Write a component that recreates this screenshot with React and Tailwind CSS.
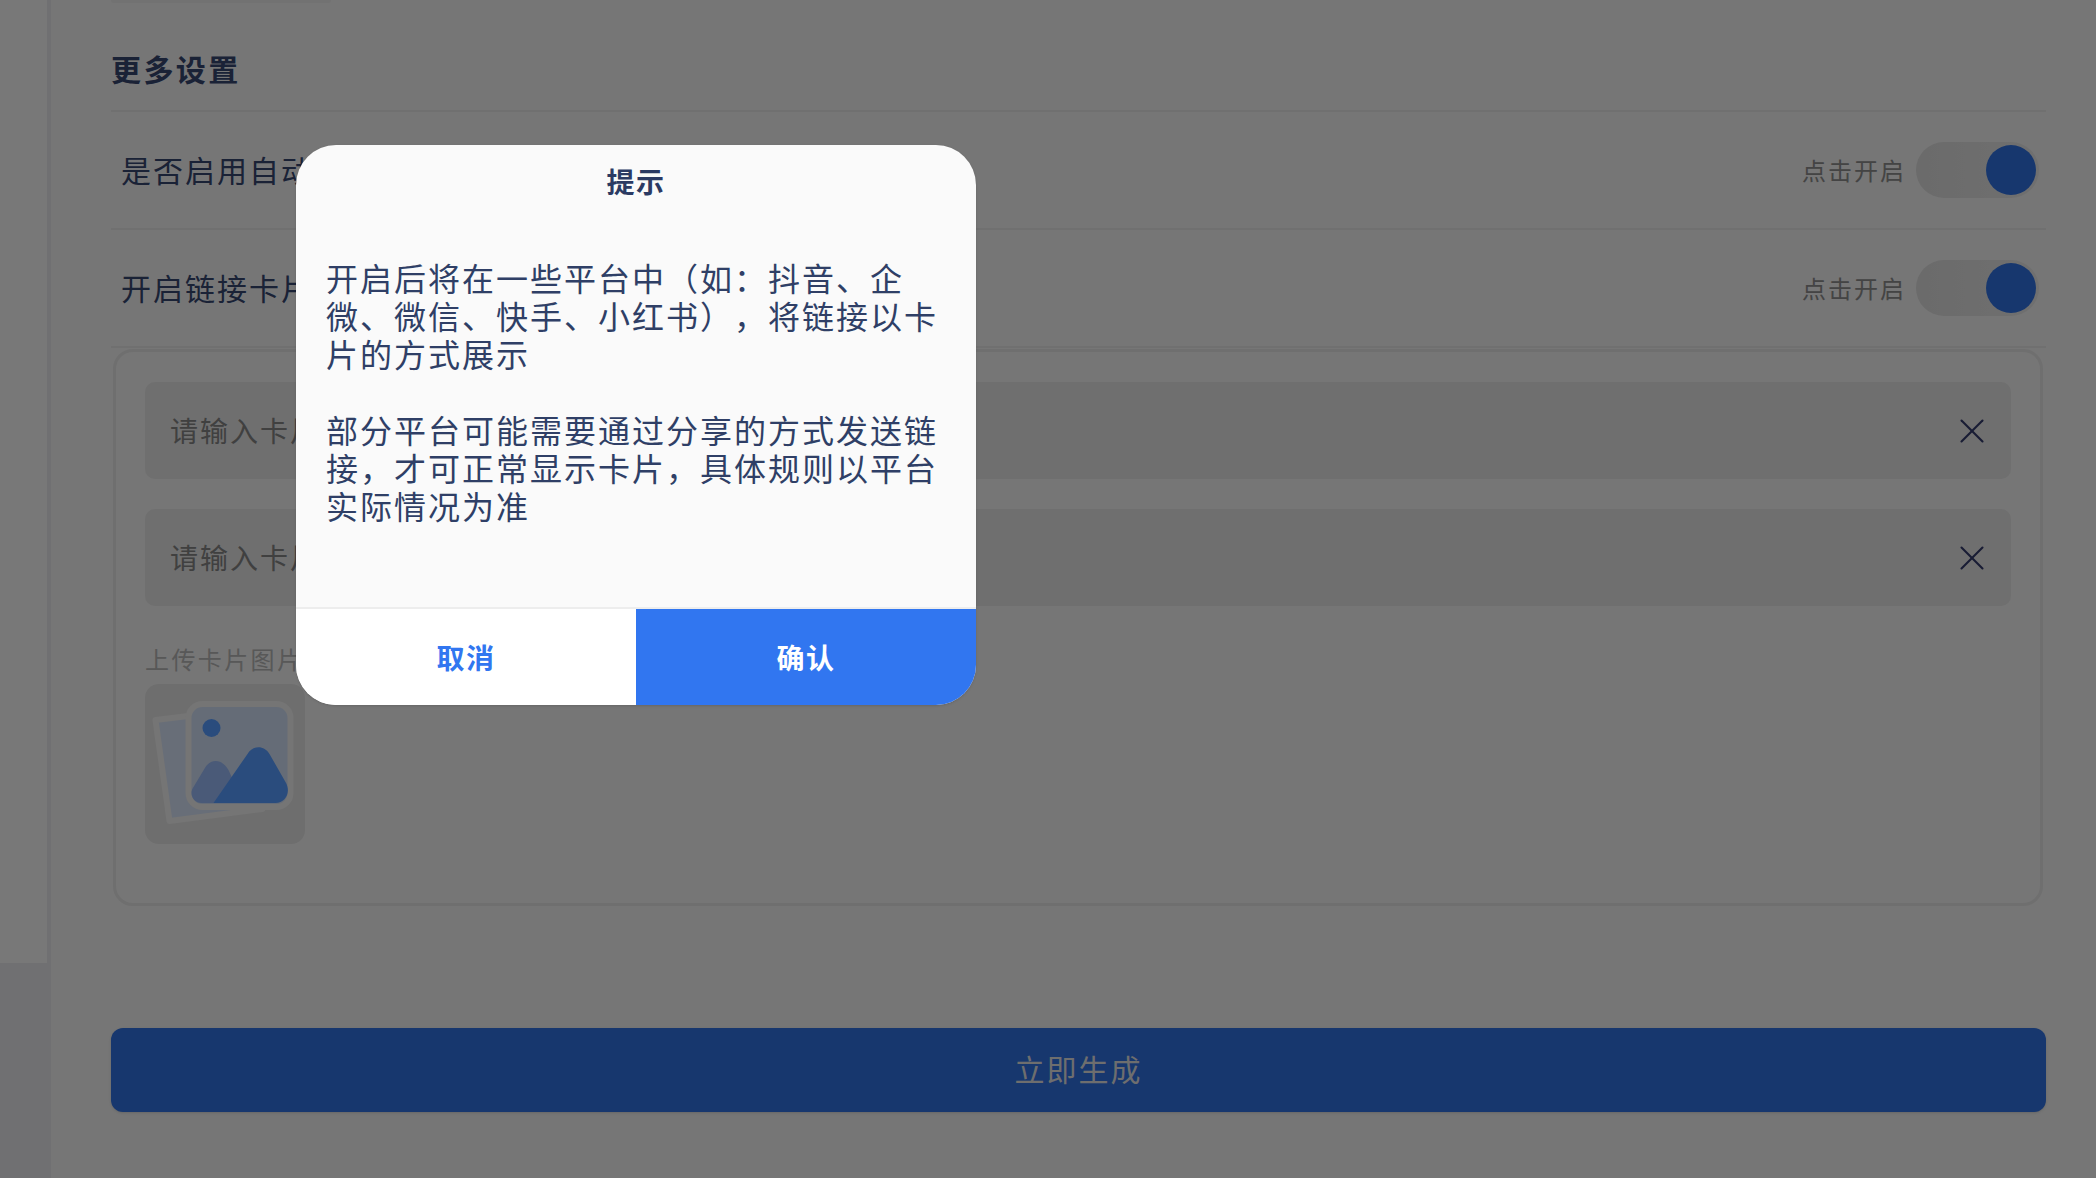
import { X } from "lucide-react";

const cjk = { fontFamily: '"Noto Sans CJK SC", "Noto Sans", sans-serif' };

function SwitchRow({ label }) {
  return (
    <div className="flex h-[118px] items-center justify-between border-b-2 border-[#e0e0e0] pl-[10px] pr-[7px]">
      <span className="pb-[2px] text-[30px] tracking-[2px] text-[#34446c]">{label}</span>
      <div className="flex items-center gap-[10px]">
        <span className="text-[24px] tracking-[2px] text-[#888888]">点击开启</span>
        <div className="flex h-[56px] w-[123px] items-center justify-end rounded-full bg-gradient-to-r from-[#d6d6d6] to-[#e0e0e0] pr-[3px]">
          <div className="h-[50px] w-[50px] rounded-full bg-[#2e6edc]" />
        </div>
      </div>
    </div>
  );
}

function CardInput({ placeholder }) {
  return (
    <div className="flex h-[97px] items-center justify-between rounded-[10px] bg-[#dedede] pl-[25px] pr-[18px]">
      <span className="pb-[2px] text-[28px] tracking-[2px] text-[#808080]">{placeholder}</span>
      <X size={42} strokeWidth={1.2} className="text-[#303868]" />
    </div>
  );
}

function PhotoIcon() {
  return (
    <svg viewBox="0 0 159 160" className="h-full w-full">
      <path d="M10 36 L100 25 L117 125 L24 137 Z" fill="#d0dcf0" stroke="#eaeaea" strokeWidth="6" strokeLinejoin="round" />
      <rect x="43" y="20" width="102" height="103" rx="14" fill="#cad8ee" stroke="#eaeaea" strokeWidth="6" />
      <circle cx="66" cy="44" r="9" fill="#5498fa" />
      <path d="M70 77 C76 77 80 81 83 86 L98 119 L56 119 C48 119 43 110 48 103 L60 83 C63 79 66 77 70 77 Z" fill="#94b4f0" />
      <path d="M68 119 L102 70 C107 61 119 61 124 70 L140 98 C146 108 140 119 130 119 Z" fill="#5498fa" />
    </svg>
  );
}

export default function App() {
  return (
    <div className="relative flex h-[1178px] w-[2096px] overflow-hidden bg-[#ececec]" style={cjk}>
      {/* Sidebar */}
      <div className="h-full w-[51px] shrink-0 bg-[#e0e0e4]">
        <div className="h-[963px] w-[47px] bg-[#f0f0f0]" />
      </div>

      {/* Main */}
      <div className="relative flex w-[1995px] flex-col pl-[60px]">
        <div className="absolute left-[60px] top-0 h-[3px] w-[220px] rounded-b-lg bg-[#e4e4e4]" />
        <div className="w-[1935px]">
          <div className="flex h-[112px] items-center border-b-2 border-[#e0e0e0] pt-[26px]">
            <h2 className="text-[30px] font-bold tracking-[2.4px] text-[#34446c]">更多设置</h2>
          </div>
          <SwitchRow label="是否启用自动回复" />
          <SwitchRow label="开启链接卡片" />

          <div className="ml-[2px] mr-[3px] mt-[1px] h-[557px] rounded-[20px] border-[3px] border-[#dedede] px-[29px] pt-[30px]">
            <div className="flex flex-col gap-[30px]">
              <CardInput placeholder="请输入卡片标题" />
              <CardInput placeholder="请输入卡片描述" />
            </div>
            <p className="mt-[35px] pb-[1px] text-[24px] leading-[36px] tracking-[0.1em] text-[#b0b0b0]">上传卡片图片</p>
            <div className="mt-[6px] h-[160px] w-[160px] rounded-[14px] bg-[#dcdcdc]">
              <PhotoIcon />
            </div>
          </div>

          <button className="mt-[122px] flex h-[84px] w-full items-center justify-center rounded-[12px] bg-[#2e6edc] pb-[3px] text-[30px] tracking-[2px] text-[#dcdcdc] shadow-sm">
            立即生成
          </button>
        </div>
      </div>

      {/* Overlay + dialog */}
      <div className="absolute inset-0 flex items-start bg-black/50 pl-[296px] pt-[145px]">
        <div className="flex h-[560px] w-[680px] flex-col overflow-hidden rounded-[40px] bg-[#fafafa] shadow-sm">
          <h3 className="pt-[17px] text-center text-[28px] font-bold leading-[38px] tracking-[0.05em] text-[#2b3a63]">提示</h3>
          <div className="flex-1 whitespace-pre-line px-[30px] pt-[58px] text-[32px] leading-[38px] tracking-[2px] text-[#2f3f66] [text-spacing-trim:space-all]">
            {"开启后将在一些平台中（如：抖音、企微、微信、快手、小红书），将链接以卡片的方式展示\n\n部分平台可能需要通过分享的方式发送链接，才可正常显示卡片，具体规则以平台实际情况为准"}
          </div>
          <div className="flex h-[98px] border-t-2 border-[#ededed]">
            <button className="flex-1 bg-white text-[28px] font-bold tracking-[0.05em] text-[#3176f0]">取消</button>
            <button className="flex-1 bg-[#3176f0] text-[28px] font-bold tracking-[0.05em] text-white">确认</button>
          </div>
        </div>
      </div>
    </div>
  );
}
